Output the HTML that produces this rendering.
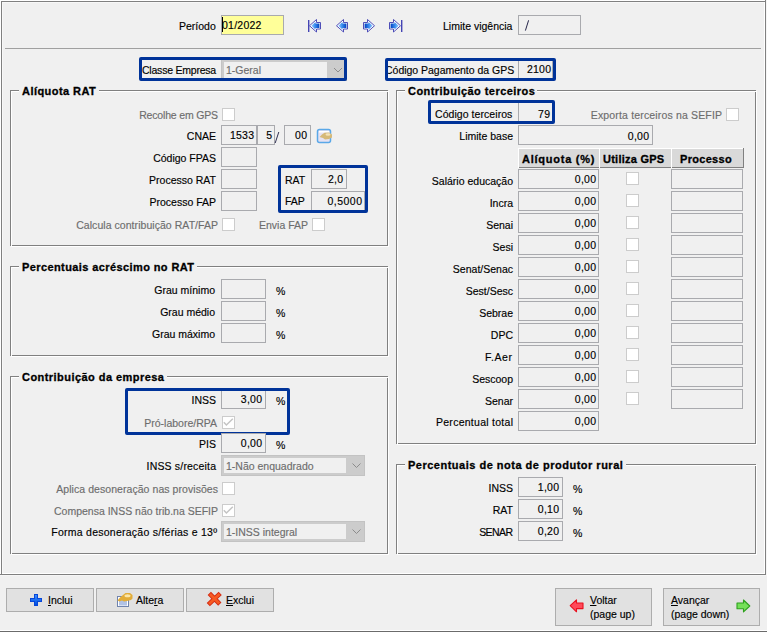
<!DOCTYPE html>
<html><head><meta charset="utf-8"><style>
html,body{margin:0;padding:0;}
body{width:767px;height:632px;background:#f0f0f0;position:relative;overflow:hidden;font-family:"Liberation Sans", sans-serif;}
.a{position:absolute;box-sizing:border-box;}
.t{position:absolute;white-space:nowrap;line-height:14px;}
u{text-decoration:underline;text-underline-offset:1px;text-decoration-thickness:1px;}
</style></head><body>
<div class="a" style="left:0px;top:0px;width:765px;height:1px;background:#ffffff;"></div>
<div class="a" style="left:0px;top:0px;width:1px;height:574px;background:#ffffff;"></div>
<div class="a" style="left:2px;top:2px;width:762px;height:1px;background:#f8f8f8;"></div>
<div class="a" style="left:2px;top:2px;width:1px;height:571px;background:#f8f8f8;"></div>
<div class="a" style="left:764px;top:2px;width:1px;height:572px;background:#ffffff;"></div>
<div class="a" style="left:2px;top:573px;width:763px;height:1px;background:#ffffff;"></div>
<div class="a" style="left:1px;top:1px;width:765px;height:1px;background:#808080;"></div>
<div class="a" style="left:1px;top:1px;width:1px;height:574px;background:#808080;"></div>
<div class="a" style="left:765px;top:0px;width:1px;height:575px;background:#808080;"></div>
<div class="a" style="left:0px;top:574px;width:766px;height:1px;background:#808080;"></div>
<div class="a" style="left:766px;top:0px;width:1px;height:576px;background:#f6f6f6;"></div>
<div class="a" style="left:0px;top:575px;width:767px;height:1px;background:#f6f6f6;"></div>
<div class="a" style="left:5px;top:48px;width:756px;height:1px;background:#a0a0a0;"></div>
<div class="t" style="left:179px;top:19.36px;font-size:10.5px;color:#000;-webkit-text-stroke:0.15px currentColor;">Período</div>
<div class="a" style="left:221px;top:15px;width:63px;height:20px;border:1px solid #a9aaae;background:#ffff99;"></div>
<div class="t" style="left:222px;top:18.36px;font-size:10.5px;color:#000;-webkit-text-stroke:0.15px currentColor;letter-spacing:0.25px;">01/2022</div>
<div class="a" style="left:222px;top:17px;width:1px;height:15px;background:#000"></div>
<div class="t" style="left:443px;top:19.36px;font-size:10.5px;color:#000;-webkit-text-stroke:0.15px currentColor;">Limite vigência</div>
<div class="a" style="left:518px;top:15px;width:63px;height:20px;border:1px solid #a9aaae;background:#f0f0f0;"></div>
<svg class="a" style="left:523px;top:18px" width="8" height="15"><line x1="2.4" y1="12.6" x2="5.6" y2="2.3" stroke="#1a1a40" stroke-width="0.95"/></svg>
<svg class="a" style="left:0;top:0" width="0" height="0"><defs><linearGradient id="gl" x1="0" y1="0" x2="1" y2="0"><stop offset="0" stop-color="#9ad0ff"/><stop offset="0.45" stop-color="#3c8ef0"/><stop offset="1" stop-color="#0040c0"/></linearGradient><linearGradient id="gr" x1="1" y1="0" x2="0" y2="0"><stop offset="0" stop-color="#9ad0ff"/><stop offset="0.45" stop-color="#3c8ef0"/><stop offset="1" stop-color="#0040c0"/></linearGradient></defs></svg>
<svg class="a" style="left:308px;top:19px" width="15" height="15"><rect x="0" y="1" width="1.4" height="12" fill="#4444b4"/><path d="M1.5,6.75 L8.5,0.5 V3.5 H12.5 V10 H8.5 V13 Z" fill="#ffffff" stroke="#4444b4" stroke-width="0.95" stroke-linejoin="round"/><path d="M3.3,6.75 L7.5,3 V4.6 H11.4 V8.9 H7.5 V10.5 Z" fill="url(#gl)"/></svg>
<svg class="a" style="left:336px;top:19px" width="15" height="15"><path d="M0.5,6.75 L7.5,0.5 V3.5 H11.5 V10 H7.5 V13 Z" fill="#ffffff" stroke="#4444b4" stroke-width="0.95" stroke-linejoin="round"/><path d="M2.3,6.75 L6.5,3 V4.6 H10.4 V8.9 H6.5 V10.5 Z" fill="url(#gl)"/></svg>
<svg class="a" style="left:363px;top:19px" width="15" height="15"><path d="M11.5,6.75 L4.5,0.5 V3.5 H0.5 V10 H4.5 V13 Z" fill="#ffffff" stroke="#4444b4" stroke-width="0.95" stroke-linejoin="round"/><path d="M9.7,6.75 L5.5,3 V4.6 H1.6 V8.9 H5.5 V10.5 Z" fill="url(#gr)"/></svg>
<svg class="a" style="left:389px;top:19px" width="15" height="15"><path d="M11.5,6.75 L4.5,0.5 V3.5 H0.5 V10 H4.5 V13 Z" fill="#ffffff" stroke="#4444b4" stroke-width="0.95" stroke-linejoin="round"/><path d="M9.7,6.75 L5.5,3 V4.6 H1.6 V8.9 H5.5 V10.5 Z" fill="url(#gr)"/><rect x="12" y="1" width="1.4" height="12" fill="#4444b4"/></svg>
<div class="a" style="left:221px;top:59px;width:126px;height:22px;border:1px solid #c3c3c3;background:#cccccc;"></div>
<div class="a" style="left:224px;top:62px;width:103px;height:16px;background:#f0f0f0;"></div>
<div class="t" style="left:226px;top:63.36px;font-size:10.5px;color:#6d6d6d;-webkit-text-stroke:0.15px currentColor;">1-Geral</div>
<svg class="a" style="left:327px;top:59px" width="20" height="22"><polyline points="7.0,9.0 11.0,13.0 15.0,9.0" fill="none" stroke="#8c8c8c" stroke-width="1"/></svg>
<div class="t" style="left:142px;top:63.36px;font-size:10.5px;color:#000;-webkit-text-stroke:0.15px currentColor;letter-spacing:-0.22px;">Classe Empresa</div>
<div class="a" style="left:139px;top:57px;width:208px;height:24px;border:3px solid #003399;border-radius:2px;"></div>
<div class="a" style="left:518px;top:59px;width:35px;height:21px;border:1px solid #a9aaae;background:#f0f0f0;"></div>
<div class="t" style="right:215.75px;top:62.36px;font-size:10.5px;color:#000;-webkit-text-stroke:0.15px currentColor;letter-spacing:0.25px;">2100</div>
<div class="t" style="left:385px;top:63.36px;font-size:10.5px;color:#000;-webkit-text-stroke:0.15px currentColor;letter-spacing:-0.02px;">Código Pagamento da GPS</div>
<div class="a" style="left:385px;top:58px;width:171px;height:23px;border:3px solid #003399;border-radius:2px;"></div>
<div class="a" style="left:10px;top:90px;width:378px;height:156px;border:1px solid #808080;"></div>
<div class="a" style="left:11px;top:91px;width:378px;height:156px;border:1px solid #ffffff;"></div>
<div class="a" style="left:19px;top:84px;width:80px;height:12px;background:#f0f0f0"></div>
<div class="t" style="left:22px;top:84.18px;font-size:11px;color:#000;font-weight:bold;-webkit-text-stroke:0.3px currentColor;letter-spacing:0.45px;">Alíquota RAT</div>
<div class="t" style="right:549.18px;top:108.36px;font-size:10.5px;color:#6d6d6d;-webkit-text-stroke:0.15px currentColor;letter-spacing:-0.18px;">Recolhe em GPS</div>
<div class="a" style="left:222px;top:108px;width:13px;height:13px;border:1px solid #cccccc;background:#ffffff;"></div>
<div class="t" style="right:551.00px;top:129.36px;font-size:10.5px;color:#000;-webkit-text-stroke:0.15px currentColor;">CNAE</div>
<div class="a" style="left:221px;top:125px;width:36px;height:20px;border:1px solid #a9aaae;background:#f0f0f0;"></div>
<div class="t" style="right:512.75px;top:128.36px;font-size:10.5px;color:#000;-webkit-text-stroke:0.15px currentColor;letter-spacing:0.25px;">1533</div>
<div class="a" style="left:257px;top:125px;width:18px;height:20px;border:1px solid #a9aaae;background:#f0f0f0;"></div>
<div class="t" style="right:494.75px;top:128.36px;font-size:10.5px;color:#000;-webkit-text-stroke:0.15px currentColor;letter-spacing:0.25px;">5</div>
<svg class="a" style="left:273px;top:130px" width="8" height="15"><line x1="2.2" y1="13" x2="5.8" y2="2" stroke="#1a1a40" stroke-width="0.9"/></svg>
<div class="a" style="left:284px;top:125px;width:27px;height:20px;border:1px solid #a9aaae;background:#f0f0f0;"></div>
<div class="t" style="right:459.75px;top:128.36px;font-size:10.5px;color:#000;-webkit-text-stroke:0.15px currentColor;letter-spacing:0.25px;">00</div>
<div class="t" style="right:551.00px;top:151.36px;font-size:10.5px;color:#000;-webkit-text-stroke:0.15px currentColor;">Código FPAS</div>
<div class="a" style="left:221px;top:147px;width:36px;height:20px;border:1px solid #a9aaae;background:#f0f0f0;"></div>
<div class="t" style="right:551.00px;top:173.36px;font-size:10.5px;color:#000;-webkit-text-stroke:0.15px currentColor;">Processo RAT</div>
<div class="a" style="left:221px;top:169px;width:36px;height:20px;border:1px solid #a9aaae;background:#f0f0f0;"></div>
<div class="t" style="right:551.00px;top:195.36px;font-size:10.5px;color:#000;-webkit-text-stroke:0.15px currentColor;">Processo FAP</div>
<div class="a" style="left:221px;top:191px;width:36px;height:20px;border:1px solid #a9aaae;background:#f0f0f0;"></div>
<div class="t" style="right:548.95px;top:218.36px;font-size:10.5px;color:#6d6d6d;-webkit-text-stroke:0.15px currentColor;letter-spacing:0.05px;">Calcula contribuição RAT/FAP</div>
<div class="a" style="left:222px;top:218px;width:13px;height:13px;border:1px solid #cccccc;background:#ffffff;"></div>
<div class="t" style="right:459.00px;top:218.36px;font-size:10.5px;color:#6d6d6d;-webkit-text-stroke:0.15px currentColor;">Envia FAP</div>
<div class="a" style="left:312px;top:218px;width:13px;height:13px;border:1px solid #cccccc;background:#ffffff;"></div>
<div class="t" style="left:285px;top:173.36px;font-size:10.5px;color:#000;-webkit-text-stroke:0.15px currentColor;">RAT</div>
<div class="a" style="left:311px;top:169px;width:36px;height:20px;border:1px solid #a9aaae;background:#f0f0f0;"></div>
<div class="t" style="right:423.75px;top:172.36px;font-size:10.5px;color:#000;-webkit-text-stroke:0.15px currentColor;letter-spacing:0.25px;">2,0</div>
<div class="t" style="left:285px;top:194.36px;font-size:10.5px;color:#000;-webkit-text-stroke:0.15px currentColor;">FAP</div>
<div class="a" style="left:311px;top:191px;width:54px;height:22px;border:1px solid #a9aaae;background:#f0f0f0;"></div>
<div class="t" style="right:404.50px;top:194.36px;font-size:10.5px;color:#000;-webkit-text-stroke:0.15px currentColor;letter-spacing:0.5px;">0,5000</div>
<div class="a" style="left:278px;top:165px;width:90px;height:48px;border:3px solid #003399;border-radius:2px;"></div>
<svg class="a" style="left:316px;top:128px" width="17" height="16"><rect x="1.5" y="1.5" width="13" height="13" rx="2" fill="#e6e2f2" stroke="#5aa8e8" stroke-width="1.5"/><rect x="3" y="3" width="10" height="1.5" fill="#ffffff"/><path d="M3.5,9 L6,6.5 L8.5,4.8 L13,4.5 L16,6.5 L16,9.5 L13,11 L9,11.5 L7,10 Z" fill="#d6b978"/><ellipse cx="12" cy="6.5" rx="2.5" ry="1.2" fill="#f3e2b8"/></svg>
<div class="a" style="left:10px;top:266px;width:378px;height:90px;border:1px solid #808080;"></div>
<div class="a" style="left:11px;top:267px;width:378px;height:90px;border:1px solid #ffffff;"></div>
<div class="a" style="left:19px;top:260px;width:178px;height:12px;background:#f0f0f0"></div>
<div class="t" style="left:22px;top:260.18px;font-size:11px;color:#000;font-weight:bold;-webkit-text-stroke:0.3px currentColor;letter-spacing:0.4px;">Percentuais acréscimo no RAT</div>
<div class="t" style="right:552.00px;top:283.36px;font-size:10.5px;color:#000;-webkit-text-stroke:0.15px currentColor;">Grau mínimo</div>
<div class="a" style="left:221px;top:279px;width:45px;height:20px;border:1px solid #a9aaae;background:#f0f0f0;"></div>
<div class="t" style="left:276px;top:284.36px;font-size:10.5px;color:#000;-webkit-text-stroke:0.15px currentColor;">%</div>
<div class="t" style="right:552.00px;top:305.36px;font-size:10.5px;color:#000;-webkit-text-stroke:0.15px currentColor;">Grau médio</div>
<div class="a" style="left:221px;top:301px;width:45px;height:20px;border:1px solid #a9aaae;background:#f0f0f0;"></div>
<div class="t" style="left:276px;top:306.36px;font-size:10.5px;color:#000;-webkit-text-stroke:0.15px currentColor;">%</div>
<div class="t" style="right:552.00px;top:327.36px;font-size:10.5px;color:#000;-webkit-text-stroke:0.15px currentColor;">Grau máximo</div>
<div class="a" style="left:221px;top:323px;width:45px;height:20px;border:1px solid #a9aaae;background:#f0f0f0;"></div>
<div class="t" style="left:276px;top:328.36px;font-size:10.5px;color:#000;-webkit-text-stroke:0.15px currentColor;">%</div>
<div class="a" style="left:10px;top:376px;width:378px;height:178px;border:1px solid #808080;"></div>
<div class="a" style="left:11px;top:377px;width:378px;height:178px;border:1px solid #ffffff;"></div>
<div class="a" style="left:19px;top:370px;width:148px;height:12px;background:#f0f0f0"></div>
<div class="t" style="left:22px;top:370.18px;font-size:11px;color:#000;font-weight:bold;-webkit-text-stroke:0.3px currentColor;letter-spacing:0.45px;">Contribuição da empresa</div>
<div class="t" style="right:551.00px;top:393.36px;font-size:10.5px;color:#000;-webkit-text-stroke:0.15px currentColor;">INSS</div>
<div class="a" style="left:221px;top:389px;width:45px;height:20px;border:1px solid #a9aaae;background:#f0f0f0;"></div>
<div class="t" style="right:504.75px;top:392.36px;font-size:10.5px;color:#000;-webkit-text-stroke:0.15px currentColor;letter-spacing:0.25px;">3,00</div>
<div class="t" style="left:276px;top:394.36px;font-size:10.5px;color:#000;-webkit-text-stroke:0.15px currentColor;">%</div>
<div class="t" style="right:550.00px;top:416.36px;font-size:10.5px;color:#6d6d6d;-webkit-text-stroke:0.15px currentColor;">Pró-labore/RPA</div>
<div class="a" style="left:222px;top:416px;width:13px;height:13px;border:1px solid #cccccc;background:#ffffff;"></div>
<svg class="a" style="left:222px;top:416px" width="13" height="13"><polyline points="1.8,6.3 4.4,9 10.8,2.8" fill="none" stroke="#c4c4c4" stroke-width="1.5"/></svg>
<div class="a" style="left:125px;top:388px;width:165px;height:47px;border:3px solid #003399;border-radius:2px;"></div>
<div class="t" style="right:551.00px;top:437.36px;font-size:10.5px;color:#000;-webkit-text-stroke:0.15px currentColor;">PIS</div>
<div class="a" style="left:221px;top:433px;width:45px;height:20px;border:1px solid #a9aaae;background:#f0f0f0;"></div>
<div class="t" style="right:504.75px;top:436.36px;font-size:10.5px;color:#000;-webkit-text-stroke:0.15px currentColor;letter-spacing:0.25px;">0,00</div>
<div class="t" style="left:276px;top:438.36px;font-size:10.5px;color:#000;-webkit-text-stroke:0.15px currentColor;">%</div>
<div class="t" style="right:550.82px;top:459.36px;font-size:10.5px;color:#000;-webkit-text-stroke:0.15px currentColor;letter-spacing:0.18px;">INSS s/receita</div>
<div class="a" style="left:221px;top:455px;width:144px;height:21px;border:1px solid #c3c3c3;background:#cccccc;"></div>
<div class="a" style="left:224px;top:458px;width:122px;height:15px;background:#f0f0f0;"></div>
<div class="t" style="left:226px;top:459.36px;font-size:10.5px;color:#6d6d6d;-webkit-text-stroke:0.15px currentColor;">1-Não enquadrado</div>
<svg class="a" style="left:346px;top:455px" width="19" height="21"><polyline points="6.5,8.5 10.5,12.5 14.5,8.5" fill="none" stroke="#8c8c8c" stroke-width="1"/></svg>
<div class="t" style="right:548.94px;top:482.36px;font-size:10.5px;color:#6d6d6d;-webkit-text-stroke:0.15px currentColor;letter-spacing:0.06px;">Aplica desoneração nas provisões</div>
<div class="a" style="left:222px;top:482px;width:13px;height:13px;border:1px solid #cccccc;background:#ffffff;"></div>
<div class="t" style="right:549.00px;top:504.36px;font-size:10.5px;color:#6d6d6d;-webkit-text-stroke:0.15px currentColor;">Compensa INSS não trib.na SEFIP</div>
<div class="a" style="left:222px;top:504px;width:13px;height:13px;border:1px solid #cccccc;background:#ffffff;"></div>
<svg class="a" style="left:222px;top:504px" width="13" height="13"><polyline points="1.8,6.3 4.4,9 10.8,2.8" fill="none" stroke="#c4c4c4" stroke-width="1.5"/></svg>
<div class="t" style="right:549.75px;top:525.36px;font-size:10.5px;color:#000;-webkit-text-stroke:0.15px currentColor;letter-spacing:0.25px;">Forma desoneração s/férias e 13º</div>
<div class="a" style="left:221px;top:521px;width:144px;height:21px;border:1px solid #c3c3c3;background:#cccccc;"></div>
<div class="a" style="left:224px;top:524px;width:122px;height:15px;background:#f0f0f0;"></div>
<div class="t" style="left:226px;top:525.36px;font-size:10.5px;color:#6d6d6d;-webkit-text-stroke:0.15px currentColor;">1-INSS integral</div>
<svg class="a" style="left:346px;top:521px" width="19" height="21"><polyline points="6.5,8.5 10.5,12.5 14.5,8.5" fill="none" stroke="#8c8c8c" stroke-width="1"/></svg>
<div class="a" style="left:396px;top:90px;width:360px;height:354px;border:1px solid #808080;"></div>
<div class="a" style="left:397px;top:91px;width:360px;height:354px;border:1px solid #ffffff;"></div>
<div class="a" style="left:405px;top:84px;width:132px;height:12px;background:#f0f0f0"></div>
<div class="t" style="left:408px;top:84.18px;font-size:11px;color:#000;font-weight:bold;-webkit-text-stroke:0.3px currentColor;letter-spacing:0.45px;">Contribuição terceiros</div>
<div class="t" style="left:435px;top:107.36px;font-size:10.5px;color:#000;-webkit-text-stroke:0.15px currentColor;letter-spacing:0.06px;">Código terceiros</div>
<div class="a" style="left:518px;top:102px;width:35px;height:21px;border:1px solid #a9aaae;background:#f0f0f0;"></div>
<div class="t" style="right:216.75px;top:107.36px;font-size:10.5px;color:#000;-webkit-text-stroke:0.15px currentColor;letter-spacing:0.25px;">79</div>
<div class="a" style="left:428px;top:100px;width:127px;height:24px;border:3px solid #003399;border-radius:2px;"></div>
<div class="t" style="right:44.84px;top:108.36px;font-size:10.5px;color:#6d6d6d;-webkit-text-stroke:0.15px currentColor;letter-spacing:0.16px;">Exporta terceiros na SEFIP</div>
<div class="a" style="left:726px;top:108px;width:13px;height:13px;border:1px solid #cccccc;background:#ffffff;"></div>
<div class="t" style="right:254.00px;top:129.36px;font-size:10.5px;color:#000;-webkit-text-stroke:0.15px currentColor;">Limite base</div>
<div class="a" style="left:518px;top:125px;width:135px;height:20px;border:1px solid #a9aaae;background:#f0f0f0;"></div>
<div class="t" style="right:117.75px;top:129.36px;font-size:10.5px;color:#000;-webkit-text-stroke:0.15px currentColor;letter-spacing:0.25px;">0,00</div>
<div class="a" style="left:518px;top:148px;width:81px;height:20px;background:#d9d9d9;"></div>
<div class="a" style="left:518px;top:167px;width:81px;height:1px;background:#808080;"></div>
<div class="a" style="left:518px;top:148px;width:81px;height:1px;background:#ffffff;"></div>
<div class="a" style="left:518px;top:148px;width:1px;height:20px;background:#ffffff;"></div>
<div class="t" style="left:522px;top:152.18px;font-size:11px;color:#000;font-weight:bold;-webkit-text-stroke:0.3px currentColor;letter-spacing:0.75px;">Alíquota (%)</div>
<div class="a" style="left:599px;top:148px;width:72px;height:20px;background:#d9d9d9;"></div>
<div class="a" style="left:599px;top:167px;width:72px;height:1px;background:#808080;"></div>
<div class="a" style="left:599px;top:148px;width:72px;height:1px;background:#ffffff;"></div>
<div class="a" style="left:599px;top:148px;width:1px;height:20px;background:#ffffff;"></div>
<div class="t" style="left:603px;top:152.18px;font-size:11px;color:#000;font-weight:bold;-webkit-text-stroke:0.3px currentColor;letter-spacing:0.25px;">Utiliza GPS</div>
<div class="a" style="left:671px;top:148px;width:73px;height:20px;background:#d9d9d9;"></div>
<div class="a" style="left:671px;top:167px;width:73px;height:1px;background:#808080;"></div>
<div class="a" style="left:671px;top:148px;width:73px;height:1px;background:#ffffff;"></div>
<div class="a" style="left:671px;top:148px;width:1px;height:20px;background:#ffffff;"></div>
<div class="t" style="left:680px;top:152.18px;font-size:11px;color:#000;font-weight:bold;-webkit-text-stroke:0.3px currentColor;letter-spacing:0.3px;">Processo</div>
<div class="a" style="left:743px;top:148px;width:1px;height:20px;background:#808080;"></div>
<div class="t" style="right:254.00px;top:174.36px;font-size:10.5px;color:#000;-webkit-text-stroke:0.15px currentColor;">Salário educação</div>
<div class="a" style="left:518px;top:169px;width:81px;height:20px;border:1px solid #a9aaae;background:#f0f0f0;"></div>
<div class="t" style="right:170.75px;top:172.36px;font-size:10.5px;color:#000;-webkit-text-stroke:0.15px currentColor;letter-spacing:0.25px;">0,00</div>
<div class="a" style="left:626px;top:172px;width:13px;height:13px;border:1px solid #cccccc;background:#ffffff;"></div>
<div class="a" style="left:671px;top:169px;width:72px;height:20px;border:1px solid #a9aaae;background:#f0f0f0;"></div>
<div class="t" style="right:254.00px;top:196.36px;font-size:10.5px;color:#000;-webkit-text-stroke:0.15px currentColor;">Incra</div>
<div class="a" style="left:518px;top:191px;width:81px;height:20px;border:1px solid #a9aaae;background:#f0f0f0;"></div>
<div class="t" style="right:170.75px;top:194.36px;font-size:10.5px;color:#000;-webkit-text-stroke:0.15px currentColor;letter-spacing:0.25px;">0,00</div>
<div class="a" style="left:626px;top:194px;width:13px;height:13px;border:1px solid #cccccc;background:#ffffff;"></div>
<div class="a" style="left:671px;top:191px;width:72px;height:20px;border:1px solid #a9aaae;background:#f0f0f0;"></div>
<div class="t" style="right:254.00px;top:218.36px;font-size:10.5px;color:#000;-webkit-text-stroke:0.15px currentColor;">Senai</div>
<div class="a" style="left:518px;top:213px;width:81px;height:20px;border:1px solid #a9aaae;background:#f0f0f0;"></div>
<div class="t" style="right:170.75px;top:216.36px;font-size:10.5px;color:#000;-webkit-text-stroke:0.15px currentColor;letter-spacing:0.25px;">0,00</div>
<div class="a" style="left:626px;top:216px;width:13px;height:13px;border:1px solid #cccccc;background:#ffffff;"></div>
<div class="a" style="left:671px;top:213px;width:72px;height:20px;border:1px solid #a9aaae;background:#f0f0f0;"></div>
<div class="t" style="right:254.00px;top:240.36px;font-size:10.5px;color:#000;-webkit-text-stroke:0.15px currentColor;">Sesi</div>
<div class="a" style="left:518px;top:235px;width:81px;height:20px;border:1px solid #a9aaae;background:#f0f0f0;"></div>
<div class="t" style="right:170.75px;top:238.36px;font-size:10.5px;color:#000;-webkit-text-stroke:0.15px currentColor;letter-spacing:0.25px;">0,00</div>
<div class="a" style="left:626px;top:238px;width:13px;height:13px;border:1px solid #cccccc;background:#ffffff;"></div>
<div class="a" style="left:671px;top:235px;width:72px;height:20px;border:1px solid #a9aaae;background:#f0f0f0;"></div>
<div class="t" style="right:254.00px;top:262.36px;font-size:10.5px;color:#000;-webkit-text-stroke:0.15px currentColor;">Senat/Senac</div>
<div class="a" style="left:518px;top:257px;width:81px;height:20px;border:1px solid #a9aaae;background:#f0f0f0;"></div>
<div class="t" style="right:170.75px;top:260.36px;font-size:10.5px;color:#000;-webkit-text-stroke:0.15px currentColor;letter-spacing:0.25px;">0,00</div>
<div class="a" style="left:626px;top:260px;width:13px;height:13px;border:1px solid #cccccc;background:#ffffff;"></div>
<div class="a" style="left:671px;top:257px;width:72px;height:20px;border:1px solid #a9aaae;background:#f0f0f0;"></div>
<div class="t" style="right:254.00px;top:284.36px;font-size:10.5px;color:#000;-webkit-text-stroke:0.15px currentColor;">Sest/Sesc</div>
<div class="a" style="left:518px;top:279px;width:81px;height:20px;border:1px solid #a9aaae;background:#f0f0f0;"></div>
<div class="t" style="right:170.75px;top:282.36px;font-size:10.5px;color:#000;-webkit-text-stroke:0.15px currentColor;letter-spacing:0.25px;">0,00</div>
<div class="a" style="left:626px;top:282px;width:13px;height:13px;border:1px solid #cccccc;background:#ffffff;"></div>
<div class="a" style="left:671px;top:279px;width:72px;height:20px;border:1px solid #a9aaae;background:#f0f0f0;"></div>
<div class="t" style="right:254.00px;top:306.36px;font-size:10.5px;color:#000;-webkit-text-stroke:0.15px currentColor;">Sebrae</div>
<div class="a" style="left:518px;top:301px;width:81px;height:20px;border:1px solid #a9aaae;background:#f0f0f0;"></div>
<div class="t" style="right:170.75px;top:304.36px;font-size:10.5px;color:#000;-webkit-text-stroke:0.15px currentColor;letter-spacing:0.25px;">0,00</div>
<div class="a" style="left:626px;top:304px;width:13px;height:13px;border:1px solid #cccccc;background:#ffffff;"></div>
<div class="a" style="left:671px;top:301px;width:72px;height:20px;border:1px solid #a9aaae;background:#f0f0f0;"></div>
<div class="t" style="right:254.00px;top:328.36px;font-size:10.5px;color:#000;-webkit-text-stroke:0.15px currentColor;">DPC</div>
<div class="a" style="left:518px;top:323px;width:81px;height:20px;border:1px solid #a9aaae;background:#f0f0f0;"></div>
<div class="t" style="right:170.75px;top:326.36px;font-size:10.5px;color:#000;-webkit-text-stroke:0.15px currentColor;letter-spacing:0.25px;">0,00</div>
<div class="a" style="left:626px;top:326px;width:13px;height:13px;border:1px solid #cccccc;background:#ffffff;"></div>
<div class="a" style="left:671px;top:323px;width:72px;height:20px;border:1px solid #a9aaae;background:#f0f0f0;"></div>
<div class="t" style="right:254.40px;top:350.36px;font-size:10.5px;color:#000;-webkit-text-stroke:0.15px currentColor;letter-spacing:0.6px;">F.Aer</div>
<div class="a" style="left:518px;top:345px;width:81px;height:20px;border:1px solid #a9aaae;background:#f0f0f0;"></div>
<div class="t" style="right:170.75px;top:348.36px;font-size:10.5px;color:#000;-webkit-text-stroke:0.15px currentColor;letter-spacing:0.25px;">0,00</div>
<div class="a" style="left:626px;top:348px;width:13px;height:13px;border:1px solid #cccccc;background:#ffffff;"></div>
<div class="a" style="left:671px;top:345px;width:72px;height:20px;border:1px solid #a9aaae;background:#f0f0f0;"></div>
<div class="t" style="right:254.00px;top:372.36px;font-size:10.5px;color:#000;-webkit-text-stroke:0.15px currentColor;">Sescoop</div>
<div class="a" style="left:518px;top:367px;width:81px;height:20px;border:1px solid #a9aaae;background:#f0f0f0;"></div>
<div class="t" style="right:170.75px;top:370.36px;font-size:10.5px;color:#000;-webkit-text-stroke:0.15px currentColor;letter-spacing:0.25px;">0,00</div>
<div class="a" style="left:626px;top:370px;width:13px;height:13px;border:1px solid #cccccc;background:#ffffff;"></div>
<div class="a" style="left:671px;top:367px;width:72px;height:20px;border:1px solid #a9aaae;background:#f0f0f0;"></div>
<div class="t" style="right:254.00px;top:394.36px;font-size:10.5px;color:#000;-webkit-text-stroke:0.15px currentColor;">Senar</div>
<div class="a" style="left:518px;top:389px;width:81px;height:20px;border:1px solid #a9aaae;background:#f0f0f0;"></div>
<div class="t" style="right:170.75px;top:392.36px;font-size:10.5px;color:#000;-webkit-text-stroke:0.15px currentColor;letter-spacing:0.25px;">0,00</div>
<div class="a" style="left:626px;top:392px;width:13px;height:13px;border:1px solid #cccccc;background:#ffffff;"></div>
<div class="a" style="left:671px;top:389px;width:72px;height:20px;border:1px solid #a9aaae;background:#f0f0f0;"></div>
<div class="t" style="right:253.73px;top:415.36px;font-size:10.5px;color:#000;-webkit-text-stroke:0.15px currentColor;letter-spacing:0.27px;">Percentual total</div>
<div class="a" style="left:518px;top:411px;width:81px;height:20px;border:1px solid #a9aaae;background:#f0f0f0;"></div>
<div class="t" style="right:170.75px;top:414.36px;font-size:10.5px;color:#000;-webkit-text-stroke:0.15px currentColor;letter-spacing:0.25px;">0,00</div>
<div class="a" style="left:396px;top:464px;width:360px;height:90px;border:1px solid #808080;"></div>
<div class="a" style="left:397px;top:465px;width:360px;height:90px;border:1px solid #ffffff;"></div>
<div class="a" style="left:405px;top:458px;width:221px;height:12px;background:#f0f0f0"></div>
<div class="t" style="left:408px;top:458.18px;font-size:11px;color:#000;font-weight:bold;-webkit-text-stroke:0.3px currentColor;letter-spacing:0.5px;">Percentuais de nota de produtor rural</div>
<div class="t" style="right:254.00px;top:481.36px;font-size:10.5px;color:#000;-webkit-text-stroke:0.15px currentColor;">INSS</div>
<div class="a" style="left:518px;top:477px;width:45px;height:20px;border:1px solid #a9aaae;background:#f0f0f0;"></div>
<div class="t" style="right:207.75px;top:480.36px;font-size:10.5px;color:#000;-webkit-text-stroke:0.15px currentColor;letter-spacing:0.25px;">1,00</div>
<div class="t" style="left:573px;top:482.36px;font-size:10.5px;color:#000;-webkit-text-stroke:0.15px currentColor;">%</div>
<div class="t" style="right:254.00px;top:503.36px;font-size:10.5px;color:#000;-webkit-text-stroke:0.15px currentColor;">RAT</div>
<div class="a" style="left:518px;top:499px;width:45px;height:20px;border:1px solid #a9aaae;background:#f0f0f0;"></div>
<div class="t" style="right:207.75px;top:502.36px;font-size:10.5px;color:#000;-webkit-text-stroke:0.15px currentColor;letter-spacing:0.25px;">0,10</div>
<div class="t" style="left:573px;top:504.36px;font-size:10.5px;color:#000;-webkit-text-stroke:0.15px currentColor;">%</div>
<div class="t" style="right:254.60px;top:525.36px;font-size:10.5px;color:#000;-webkit-text-stroke:0.15px currentColor;letter-spacing:-0.6px;">SENAR</div>
<div class="a" style="left:518px;top:521px;width:45px;height:20px;border:1px solid #a9aaae;background:#f0f0f0;"></div>
<div class="t" style="right:207.75px;top:524.36px;font-size:10.5px;color:#000;-webkit-text-stroke:0.15px currentColor;letter-spacing:0.25px;">0,20</div>
<div class="t" style="left:573px;top:526.36px;font-size:10.5px;color:#000;-webkit-text-stroke:0.15px currentColor;">%</div>
<div class="a" style="left:6px;top:588px;width:88px;height:24px;border:1px solid #adadad;background:#e1e1e1;"></div>
<svg class="a" style="left:30px;top:594px" width="12" height="12"><defs><linearGradient id="gp" x1="0" y1="0" x2="0" y2="1"><stop offset="0" stop-color="#3a8cff"/><stop offset="1" stop-color="#0050e0"/></linearGradient></defs><path d="M4,0 H8 V4 H12 V8 H8 V12 H4 V8 H0 V4 H4 Z" fill="#0846d8"/><path d="M5,1 H7 V5 H11 V7 H7 V11 H5 V7 H1 V5 H5 Z" fill="url(#gp)"/></svg>
<div class="t" style="left:48px;top:593.36px;font-size:10.5px;color:#000;-webkit-text-stroke:0.15px currentColor;"><u>I</u>nclui</div>
<div class="a" style="left:96px;top:588px;width:88px;height:24px;border:1px solid #adadad;background:#e1e1e1;"></div>
<svg class="a" style="left:116px;top:592px" width="17" height="16"><rect x="1.5" y="4.5" width="11" height="10" fill="#ffffff" stroke="#6f83ad" stroke-width="1"/><rect x="3" y="8" width="8" height="5.5" fill="#b0c2e6"/><path d="M1.5,8.5 L4,5.5 L7,3 L9.5,1 L14,1 L16.5,3 L16.5,6.5 L15,8 L11,9 L8,9.5 L6,8.5 L3.5,9.5 Z" fill="#e2ac38"/><ellipse cx="11.5" cy="3.8" rx="3" ry="1.5" fill="#fbe6a8"/></svg>
<div class="t" style="left:136px;top:593.36px;font-size:10.5px;color:#000;-webkit-text-stroke:0.15px currentColor;">Alte<u>r</u>a</div>
<div class="a" style="left:186px;top:588px;width:88px;height:24px;border:1px solid #adadad;background:#e1e1e1;"></div>
<svg class="a" style="left:206px;top:591px" width="17" height="17"><path d="M3.3,2.3 L13.8,13.2 M14.2,2.3 L2.3,13.7" stroke="#d42a12" stroke-width="4.6" stroke-linecap="butt"/><path d="M3.9,3.1 L13.2,12.5 M13.6,3.1 L3,13" stroke="#f65a22" stroke-width="2.8" stroke-linecap="butt"/></svg>
<div class="t" style="left:226px;top:593.36px;font-size:10.5px;color:#000;-webkit-text-stroke:0.15px currentColor;"><u>E</u>xclui</div>
<div class="a" style="left:555px;top:588px;width:97px;height:38px;border:1px solid #adadad;background:#e1e1e1;"></div>
<svg class="a" style="left:569px;top:598px" width="16" height="16"><path d="M1.2,7.6 L7.5,1.8 V5 H14 V10.6 H7.5 V13.8 Z" fill="#ff4a5a" stroke="#e8101e" stroke-width="1.1" stroke-linejoin="round"/></svg>
<div class="t" style="left:590px;top:593.36px;font-size:10.5px;color:#000;-webkit-text-stroke:0.15px currentColor;"><u>V</u>oltar</div>
<div class="t" style="left:590px;top:607.36px;font-size:10.5px;color:#000;-webkit-text-stroke:0.15px currentColor;">(page up)</div>
<div class="a" style="left:663px;top:588px;width:97px;height:38px;border:1px solid #adadad;background:#e1e1e1;"></div>
<div class="t" style="left:671px;top:593.36px;font-size:10.5px;color:#000;-webkit-text-stroke:0.15px currentColor;"><u>A</u>vançar</div>
<div class="t" style="left:671px;top:607.36px;font-size:10.5px;color:#000;-webkit-text-stroke:0.15px currentColor;">(page down)</div>
<svg class="a" style="left:736px;top:598px" width="16" height="16"><path d="M13.8,8 L7.5,2 V5 H1 V10.7 H7.5 V13.9 Z" fill="#74e058" stroke="#2ea01e" stroke-width="1.1" stroke-linejoin="round"/></svg>
<div class="a" style="left:0px;top:630px;width:767px;height:1px;background:#ffffff;"></div>
<div class="a" style="left:0px;top:631px;width:767px;height:1px;background:#6b6b6b;"></div>
</body></html>
